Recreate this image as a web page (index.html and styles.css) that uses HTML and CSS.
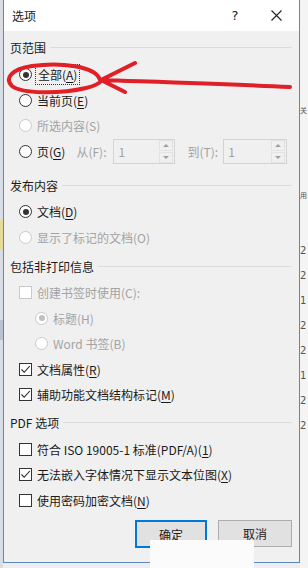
FILE: index.html
```html
<!DOCTYPE html>
<html lang="zh-CN">
<head>
    <meta charset="UTF-8">
    <meta name="viewport" content="width=device-width, initial-scale=1.0">
    <title>选项</title>
    <link rel="stylesheet" href="styles.css">
</head>
<body>

    <div class="app-left"></div>

    <div class="dialog">
        <div class="title-bar">
            <span class="title">选项</span>
            <span class="help">?</span>
            <span class="close">
                <svg width="11" height="11" viewBox="0 0 11 11"><path d="M0.5 0.5 L10.5 10.5 M10.5 0.5 L0.5 10.5" stroke="#222" stroke-width="1.1" fill="none"/></svg>
            </span>
        </div>

        <div class="content">
            <div class="group-title"><span>页范围</span></div>
            <div class="group first">
                <div class="row"><span class="radio checked"></span><span class="focus">全部(<u>A</u>)</span></div>
                <div class="row"><span class="radio"></span><span>当前页(<u>E</u>)</span></div>
                <div class="row disabled"><span class="radio"></span><span>所选内容(S)</span></div>
                <div class="row">
                    <span class="radio"></span><span>页(<u>G</u>)</span>
                    <span class="spin-label from">从(F):</span>
                    <span class="spin first-spin"><span class="spin-value">1</span><span class="spin-btns"><span class="spin-up"></span><span class="spin-down"></span></span></span>
                    <span class="spin-label to">到(T):</span>
                    <span class="spin wide"><span class="spin-value">1</span><span class="spin-btns"><span class="spin-up"></span><span class="spin-down"></span></span></span>
                </div>
            </div>

            <div class="group-title second"><span>发布内容</span></div>
            <div class="group">
                <div class="row"><span class="radio checked"></span><span>文档(<u>D</u>)</span></div>
                <div class="row disabled"><span class="radio"></span><span>显示了标记的文档(O)</span></div>
            </div>

            <div class="group-title third"><span>包括非打印信息</span></div>
            <div class="group">
                <div class="row disabled"><span class="checkbox"></span><span>创建书签时使用(C):</span></div>
                <div class="row disabled sub"><span class="radio checked"></span><span>标题(H)</span></div>
                <div class="row disabled sub"><span class="radio"></span><span>Word 书签(B)</span></div>
                <div class="row"><span class="checkbox checked"><svg width="11" height="11" viewBox="0 0 11 11"><path d="M1.5 5.5 L4.2 8.3 L9.8 2" stroke="#222" stroke-width="1.1" fill="none"/></svg></span><span>文档属性(<u>R</u>)</span></div>
                <div class="row"><span class="checkbox checked"><svg width="11" height="11" viewBox="0 0 11 11"><path d="M1.5 5.5 L4.2 8.3 L9.8 2" stroke="#222" stroke-width="1.1" fill="none"/></svg></span><span>辅助功能文档结构标记(<u>M</u>)</span></div>
            </div>

            <div class="group-title fourth"><span>PDF 选项</span></div>
            <div class="group">
                <div class="row"><span class="checkbox"></span><span>符合 ISO 19005-1 标准(PDF/A)(<u>1</u>)</span></div>
                <div class="row"><span class="checkbox checked"><svg width="11" height="11" viewBox="0 0 11 11"><path d="M1.5 5.5 L4.2 8.3 L9.8 2" stroke="#222" stroke-width="1.1" fill="none"/></svg></span><span>无法嵌入字体情况下显示文本位图(<u>X</u>)</span></div>
                <div class="row"><span class="checkbox"></span><span>使用密码加密文档(<u>N</u>)</span></div>
            </div>

            <div class="buttons">
                <button class="btn default">确定</button>
                <button class="btn">取消</button>
            </div>
        </div>
    </div>

    <div class="app-right">
        <span class="cjk">关</span>
        <span class="cjk gap">用</span>
        <span>2</span>
        <span>2</span>
        <span>1</span>
        <span>2</span>
        <span>2</span>
        <span>1</span>
        <span>2</span>
        <span>2</span>
    </div>

    <!-- hand-drawn annotation over the dialog -->
    <svg class="annotation" width="308" height="110" viewBox="0 0 308 110">
        <path d="M100 80 C 96 66, 60 62, 32 66 C 12 69, 4 78, 12 86 C 22 94, 60 94, 86 88 C 95 86, 100 83, 102 80" stroke="#e01f26" stroke-width="4" fill="none" stroke-linecap="round"/>
        <path d="M101 80 L 135 63 M101 80 L 125 92 M101 80 C 160 82, 230 84, 290 87" stroke="#e01f26" stroke-width="4" fill="none" stroke-linecap="round"/>
    </svg>

    <div class="patch"></div>

</body>
</html>
```

FILE: styles.css
```css
body {
    margin: 0;
    width: 308px;
    height: 568px;
    overflow: hidden;
    display: flex;
    font-family: "Noto Sans CJK SC", "Noto Sans", sans-serif;
    font-size: 12px;
    color: #1a1a1a;
    background-color: #eceef2;
}
.app-left {
    width: 3px;
    flex-shrink: 0;
    background: linear-gradient(#d9dde6 0 220px, #e6dc9a 220px 250px, #d9dde6 250px 320px, #b9c2d3 320px 340px, #d9dde6 340px);
}
.app-right {
    width: 8px;
    flex-shrink: 0;
    background-color: #f4f4f4;
    display: flex;
    flex-direction: column;
    padding-top: 98px;
    overflow: hidden;
    color: #555;
    font-family: "DejaVu Sans", sans-serif;
    font-size: 10px;
    line-height: 25px;
}
.app-right .cjk {
    font-family: "Noto Sans CJK SC", sans-serif;
    font-size: 7px;
}
.app-right .gap {
    margin-top: 60px;
    margin-bottom: 30px;
}
.dialog {
    width: 295px;
    height: 562px;
    flex-shrink: 0;
    border: 1px solid #5b87bd;
    border-top: none;
    background-color: #f0f0f0;
    display: flex;
    flex-direction: column;
}
.title-bar {
    height: 31px;
    background-color: #fff;
    display: flex;
    align-items: center;
    padding-left: 8px;
}
.title {
    flex: 1;
    font-size: 12px;
}
.help {
    width: 20px;
    text-align: center;
    font-family: "DejaVu Sans", sans-serif;
    font-size: 13px;
    margin-right: 26px;
}
.close {
    width: 11px;
    height: 11px;
    margin-right: 17px;
    display: flex;
}
.content {
    padding: 6px 7px 0 6px;
}
.group-title {
    height: 20px;
    display: flex;
    align-items: center;
    gap: 4px;
}
.group-title::after {
    content: "";
    flex: 1;
    height: 1px;
    background-color: #dcdcdc;
}
.group-title.second {
    margin-top: 11px;
}
.group-title.third {
    margin-top: 6px;
}
.group-title.fourth {
    margin-top: 5px;
}
.group {
    margin-top: 4px;
}
.group.first {
    margin-top: 5px;
}
.row {
    height: 25.5px;
    display: flex;
    align-items: center;
    padding-left: 9px;
    gap: 5px;
    white-space: nowrap;
}
.row > span {
    flex-shrink: 0;
}
.row.sub {
    padding-left: 25px;
}
.row.disabled {
    color: #a3a3a3;
}
u {
    text-decoration-thickness: 1px;
    text-underline-offset: 2px;
}
.radio {
    width: 11px;
    height: 11px;
    border: 1px solid #333;
    border-radius: 50%;
    background-color: #fff;
    display: flex;
    align-items: center;
    justify-content: center;
}
.radio.checked::after {
    content: "";
    width: 6px;
    height: 6px;
    border-radius: 50%;
    background-color: #333;
}
.disabled .radio {
    border-color: #cacaca;
}
.disabled .radio.checked::after {
    background-color: #c0c0c0;
}
.checkbox {
    width: 11px;
    height: 11px;
    border: 1px solid #333;
    background-color: #fff;
    display: flex;
}
.disabled .checkbox {
    border-color: #cacaca;
}
.focus {
    outline: 1px dotted #333;
    outline-offset: 1px;
    padding: 0 1px;
}
.spin-label {
    color: #a3a3a3;
}
.spin-label.from {
    margin-left: 6px;
}
.spin-label.to {
    margin-left: 7px;
}
.spin {
    width: 62px;
    height: 25px;
    box-sizing: border-box;
    border: 1px solid #d4d4d4;
    display: flex;
    align-items: center;
}
.spin.first-spin {
    margin-left: 2px;
}
.spin.wide {
    width: 64px;
}
.spin-value {
    flex: 1;
    padding-left: 4px;
    color: #a3a3a3;
}
.spin-btns {
    width: 14px;
    height: 23px;
    display: flex;
    flex-direction: column;
    gap: 1px;
    margin-right: 1px;
}
.spin-up,
.spin-down {
    flex: 1;
    border: 1px solid #e2e2e2;
    display: flex;
    align-items: center;
    justify-content: center;
}
.spin-up::after {
    content: "";
    border-left: 3px solid transparent;
    border-right: 3px solid transparent;
    border-bottom: 3px solid #a0a0a0;
}
.spin-down::after {
    content: "";
    border-left: 3px solid transparent;
    border-right: 3px solid transparent;
    border-top: 3px solid #a0a0a0;
}
.buttons {
    margin-top: 7px;
    display: flex;
    justify-content: flex-end;
    gap: 11px;
}
.btn {
    width: 74px;
    height: 27px;
    background-color: #e1e1e1;
    border: 1px solid #adadad;
    font-family: "Noto Sans CJK SC", sans-serif;
    font-size: 12px;
    color: #1a1a1a;
    padding: 0;
}
.btn.default {
    width: 72px;
    height: 28px;
    border: 2px solid #0078d7;
}
.annotation {
    position: absolute;
    left: 0;
    top: 0;
    pointer-events: none;
}
.patch {
    position: absolute;
    left: 150px;
    top: 540px;
    width: 104px;
    height: 28px;
    background-color: #fbfbfb;
}
```
